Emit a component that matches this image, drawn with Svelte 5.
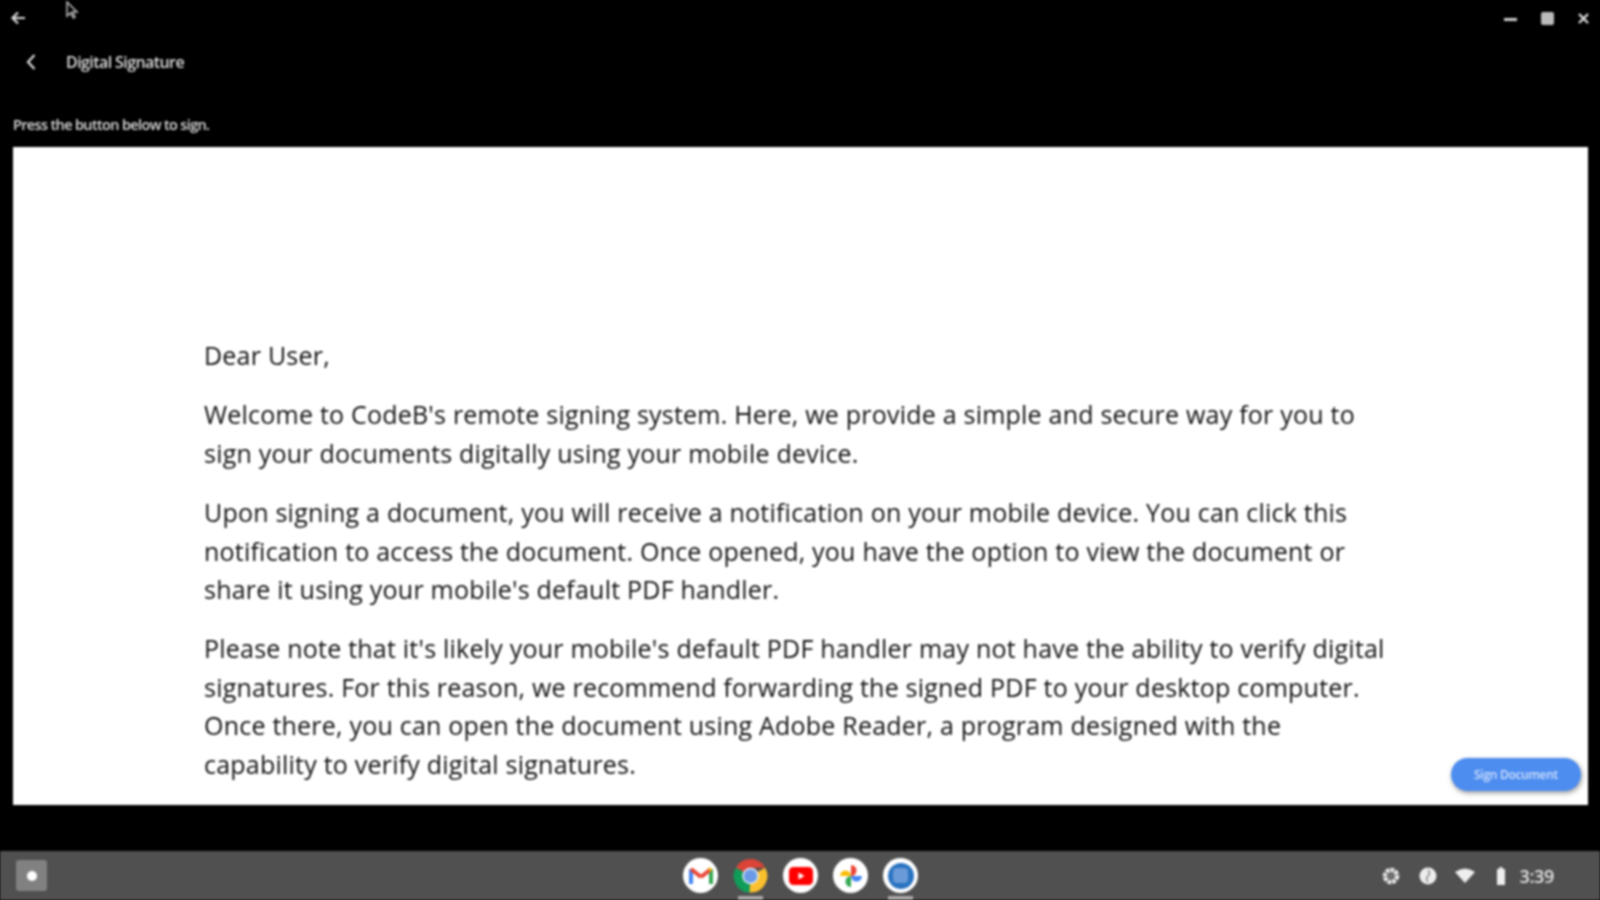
<script>
  const paragraphs = [
    ["Dear User,"],
    ["Welcome to CodeB's remote signing system. Here, we provide a simple and secure way for you to", "sign your documents digitally using your mobile device."],
    ["Upon signing a document, you will receive a notification on your mobile device. You can click this", "notification to access the document. Once opened, you have the option to view the document or", "share it using your mobile's default PDF handler."],
    ["Please note that it's likely your mobile's default PDF handler may not have the ability to verify digital", "signatures. For this reason, we recommend forwarding the signed PDF to your desktop computer.", "Once there, you can open the document using Adobe Reader, a program designed with the", "capability to verify digital signatures."]
  ];
</script>

<div class="screen">
  <div class="cursor">
    <svg width="14" height="20" viewBox="0 0 14 20"><path d="M2 1v14l3.5-3 3 5 1.5-1-2.500-5H12z" fill="#000" stroke="#bbb" stroke-width="1.500"/></svg>
  </div>
  <header class="titlebar">
    <svg class="back" width="18" height="18" viewBox="0 0 18 18"><path d="M16 9H4M9 3.500 3.500 9 9 14.500" fill="none" stroke="#ddd" stroke-width="2.200"/></svg>
    <div class="controls">
      <span class="min"></span>
      <span class="max"></span>
      <svg width="11" height="11" viewBox="0 0 11 11"><path d="M1 1l9 9M10 1l-9 9" stroke="#ddd" stroke-width="2.400"/></svg>
    </div>
  </header>
  <div class="appbar">
    <svg width="12" height="18" viewBox="0 0 12 18"><path d="M9.500 2 3 9l6.500 7" fill="none" stroke="#ddd" stroke-width="2.200"/></svg>
    <span class="title">Digital Signature</span>
  </div>
  <p class="hint">Press the button below to sign.</p>

  <main class="page">
    <div class="doc">
      {#each paragraphs as lines}
        <p>{#each lines as line}<span>{line}</span>{/each}</p>
      {/each}
    </div>
    <button class="sign">Sign Document</button>
  </main>

  <div class="spacer"></div>

  <footer class="shelf">
    <div class="launcher"><i></i></div>
    <div class="apps">
      <div class="app white">
        <svg width="24" height="20" viewBox="0 0 24 20">
          <path d="M2 18V3" stroke="#4285f4" stroke-width="4" fill="none"/>
          <path d="M22 18V3" stroke="#34a853" stroke-width="4" fill="none"/>
          <path d="M2 3l10 8" stroke="#ea4335" stroke-width="4" fill="none"/>
          <path d="M22 3l-10 8" stroke="#ea4335" stroke-width="4" fill="none"/>
          <path d="M20 4l2-1" stroke="#fbbc04" stroke-width="4" fill="none"/>
        </svg>
      </div>
      <div class="app on">
        <svg width="36" height="36" viewBox="0 0 36 36">
          <path d="M18 18 3 9.500A17 17 0 0 1 33 9.500H18z" fill="#db4437"/>
          <path d="M18 35A17 17 0 0 1 3 9.500L18 18l-1 17z" fill="#0f9d58"/>
          <path d="M33 9.500A17 17 0 0 1 17 35l1-17z" fill="#fbc02d"/>
          <circle cx="18" cy="18" r="8.500" fill="#e8eef8"/>
          <circle cx="18" cy="18" r="7" fill="#6b9be8"/>
        </svg>
      </div>
      <div class="app white">
        <svg width="24" height="18" viewBox="0 0 24 18">
          <rect width="24" height="18" rx="4.500" fill="#f00"/>
          <path d="M9.500 5.500v7l6-3.500z" fill="#fff"/>
        </svg>
      </div>
      <div class="app white">
        <svg width="26" height="26" viewBox="0 0 26 26">
          <path d="M13 13H2a5.500 5.500 0 0 1 11 0z" fill="#fbbc04"/>
          <path d="M13 13V2a5.500 5.500 0 0 1 0 11z" fill="#ea4335"/>
          <path d="M13 13h11a5.500 5.500 0 0 1-11 0z" fill="#4285f4"/>
          <path d="M13 13v11a5.500 5.500 0 0 1 0-11z" fill="#34a853"/>
        </svg>
      </div>
      <div class="app white on">
        <div class="blue"><i></i></div>
      </div>
    </div>
    <div class="tray">
      <svg width="20" height="20" viewBox="0 0 20 20"><circle cx="10" cy="10" r="6" fill="none" stroke="#eee" stroke-width="4.500" stroke-dasharray="3.500 1"/><circle cx="10" cy="10" r="2.500" fill="#777"/></svg>
      <svg width="20" height="20" viewBox="0 0 20 20"><circle cx="10" cy="10" r="8.500" fill="#eee"/><path d="M10 4q3 3 0 6t0 6" fill="none" stroke="#777" stroke-width="1.200"/></svg>
      <svg width="20" height="16" viewBox="0 0 20 16"><path d="M0 4q10-7 20 0L10 15z" fill="#eee"/></svg>
      <svg class="batt" width="10" height="18" viewBox="0 0 10 18"><path d="M3.500 0h3v2H9v16H1V2h2.500z" fill="#eee"/></svg>
      <span class="time">3:39</span>
    </div>
  </footer>
</div>

<style>
  :global(body) {
    margin: 0;
    background: #000;
  }
  .screen {
    position: relative;
    width: 1600px;
    height: 900px;
    display: flex;
    flex-direction: column;
    background: #000;
    overflow: hidden;
    font-family: "Open Sans", "Noto Sans", sans-serif;
    filter: blur(0.8px);
  }
  .cursor {
    position: absolute;
    left: 65px;
    top: 1px;
  }
  .titlebar {
    height: 36px;
    flex: none;
    display: flex;
    align-items: center;
    justify-content: space-between;
    padding: 0 11px 0 9px;
  }
  .controls {
    display: flex;
    align-items: center;
    gap: 24px;
  }
  .min {
    width: 13px;
    height: 3px;
    background: #ccc;
    margin-top: 3px;
  }
  .max {
    width: 13px;
    height: 13px;
    background: #bbb;
    border-radius: 2px;
  }
  .appbar {
    height: 54px;
    flex: none;
    display: flex;
    align-items: center;
    gap: 29px;
    padding-left: 25px;
    box-sizing: border-box;
    padding-bottom: 2px;
  }
  .title {
    color: #ddd;
    font-size: 16px;
    font-weight: 600;
    letter-spacing: -0.58px;
  }
  .hint {
    margin: 0;
    height: 57px;
    flex: none;
    box-sizing: border-box;
    padding: 25px 0 0 13px;
    color: #ddd;
    font-size: 14.500px;
    font-weight: 600;
    line-height: 20px;
    letter-spacing: -0.65px;
  }
  .page {
    position: relative;
    margin: 0 12px 0 13px;
    height: 658px;
    flex: none;
    background: #fff;
    display: flex;
    align-items: flex-end;
    box-sizing: border-box;
    padding: 0 0 22px 191px;
  }
  .doc {
    color: #111;
    font-size: 25px;
    letter-spacing: 0.22px;
    line-height: 38.400px;
    display: flex;
    flex-direction: column;
    gap: 21px;
  }
  .doc p {
    margin: 0;
  }
  .doc span {
    display: block;
    white-space: nowrap;
  }
  .sign {
    position: absolute;
    right: 7px;
    bottom: 14px;
    width: 130px;
    height: 33px;
    border: 0;
    border-radius: 17px;
    background: #4d8df0;
    color: #cfe0fb;
    font-family: inherit;
    font-size: 12px;
    font-weight: 600;
    letter-spacing: -0.3px;
    padding: 0;
    box-shadow: 1px 2px 5px rgba(0, 0, 0, 0.4);
  }
  .spacer {
    flex: 1;
  }
  .shelf {
    position: relative;
    height: 49px;
    flex: none;
    background: #505050;
    display: flex;
    align-items: center;
    justify-content: center;
  }
  .launcher {
    position: absolute;
    left: 16px;
    top: 9px;
    width: 31px;
    height: 31px;
    background: #818181;
    border-radius: 3px;
    display: flex;
    align-items: center;
    justify-content: center;
  }
  .launcher i {
    width: 10px;
    height: 10px;
    border-radius: 50%;
    background: #fff;
  }
  .apps {
    display: flex;
    gap: 15px;
    margin-left: 1px;
  }
  .app {
    position: relative;
    width: 35px;
    height: 35px;
    border-radius: 50%;
    display: flex;
    align-items: center;
    justify-content: center;
  }
  .app.white {
    background: #fff;
  }
  .app.on::after {
    content: "";
    position: absolute;
    left: 5px;
    right: 5px;
    top: 38px;
    height: 6px;
    background: #aaa;
  }
  .blue {
    width: 26px;
    height: 26px;
    border-radius: 50%;
    background: #2a73c0;
    display: flex;
    align-items: center;
    justify-content: center;
  }
  .blue i {
    width: 15px;
    height: 15px;
    background: #6a9ad8;
    border-radius: 4px;
  }
  .tray {
    position: absolute;
    right: 46px;
    top: 0;
    bottom: 0;
    display: flex;
    align-items: center;
    gap: 17px;
  }
  .batt {
    margin-left: 4px;
    margin-right: -4px;
  }
  .time {
    color: #e2e2e2;
    font-size: 18px;
    font-weight: 600;
    letter-spacing: -0.3px;
  }
</style>
